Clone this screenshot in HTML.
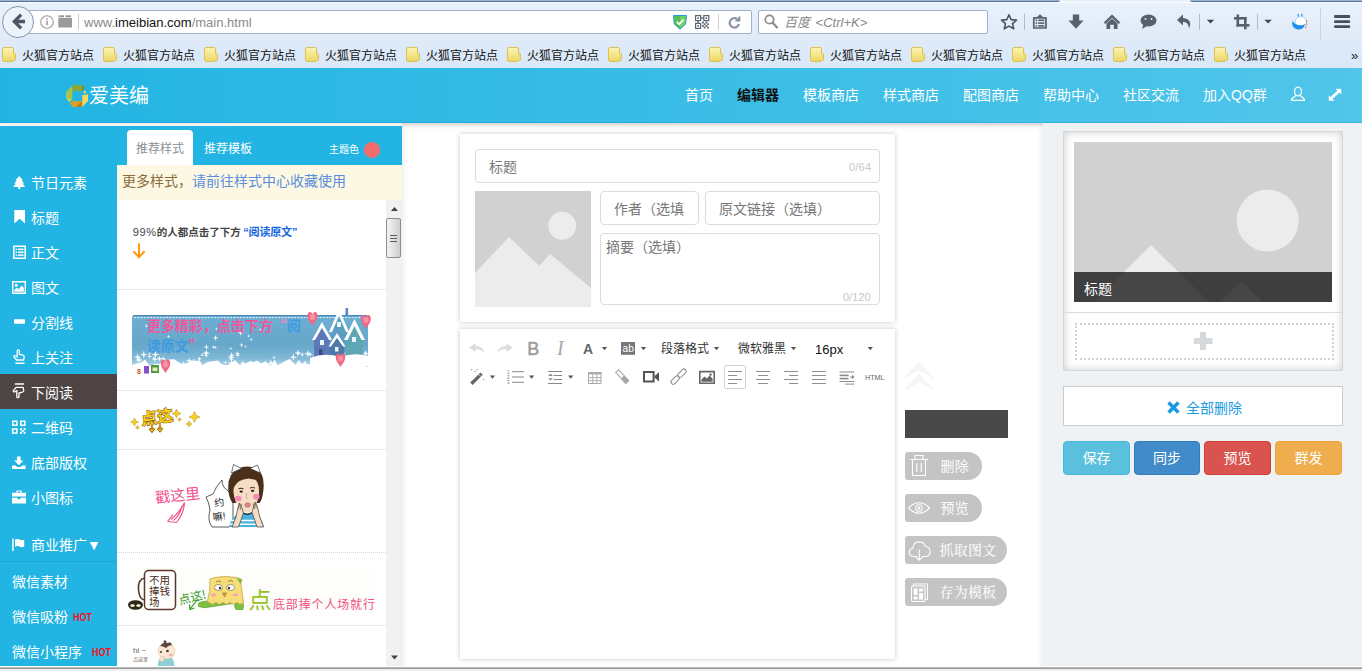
<!DOCTYPE html>
<html lang="zh-CN">
<head>
<meta charset="utf-8">
<title>爱美编</title>
<style>
*{box-sizing:border-box;margin:0;padding:0}
html,body{width:1362px;height:671px;overflow:hidden;background:#fff}
body{font-family:"Liberation Sans","Noto Sans CJK SC",sans-serif;font-size:14px;color:#333;position:relative}
.abs{position:absolute}
/* ---------- browser chrome ---------- */
#chrome{position:absolute;left:0;top:0;width:1362px;height:68px;background:linear-gradient(#e9f1fb 0,#e2ecf9 30px,#dce9f8 50px,#dbe8f7 68px)}
#chrome .topline{position:absolute;left:0;top:0;height:2px;background:linear-gradient(#9cb3d3 0,#9cb3d3 50%,#53709b 50%,#53709b 100%);border-radius:0 0 6px 6px}
#chrome .topw{position:absolute;left:0;top:2px;width:1362px;height:1px;background:#fbfdff}
#urlbar{position:absolute;left:26px;top:10px;width:726px;height:24px;background:#fff;border:1px solid #9fb2cd;border-radius:2px}
#backbtn{position:absolute;left:2px;top:6px;width:32px;height:32px;border-radius:50%;background:#edf3fb;border:1px solid #8496ae}
#urltext{position:absolute;left:84px;top:15px;font-size:13px;line-height:16px;color:#8a8a8a;letter-spacing:0}
#urltext b{color:#111;font-weight:normal}
#searchbar{position:absolute;left:758px;top:10px;width:230px;height:24px;background:#fff;border:1px solid #9fb2cd;border-radius:2px}
#searchtext{position:absolute;left:784px;top:15px;word-spacing:2px;font-size:13px;line-height:16px;color:#888;font-style:italic}
.bm{position:absolute;top:47px;height:17px;font-size:12px;line-height:17px;color:#111;white-space:nowrap}
.bm i{position:absolute;left:-1px;top:0;width:12px;height:15px;background:linear-gradient(#fbf3b2,#f5e68c 50%,#ecd668);border:1px solid #dcc255;border-radius:2px}
.bm i:after{content:"";position:absolute;left:10px;top:5px;width:2px;height:6px;background:#f0dc78;border:1px solid #dcc255;border-left:0;border-radius:0 2px 2px 0}
.bm span{position:absolute;left:19px;top:1px}
/* ---------- site header ---------- */
#hdr{position:absolute;left:0;top:68px;width:1362px;height:55px;background:linear-gradient(90deg,#22b4e2,#51c5ea);box-shadow:inset 0 -1px 0 rgba(0,140,200,.28)}
#hdrline{position:absolute;left:0;top:123px;width:1362px;height:3px;background:linear-gradient(#f3eceb,#faf6f5)}
#logo-t{position:absolute;left:89px;top:83px;font-size:20px;line-height:26px;color:#fff;letter-spacing:0}
.nav{position:absolute;top:86px;font-size:14px;line-height:18px;color:#fff;white-space:nowrap}
.nav.cur{color:#111;font-weight:bold}
/* ---------- left sidebar ---------- */
#side{position:absolute;left:0;top:126px;width:117px;height:540px;background:#22b4e2}
.si{position:absolute;left:0;width:117px;height:35px;font-size:14px;line-height:35px;color:#fff;white-space:nowrap}
.si span{position:absolute;left:31px;top:0}
.si.sel{background:#4e4443}
.si svg{position:absolute;left:12px;top:10px}
.s2{position:absolute;left:12px;font-size:14px;line-height:20px;color:#fff;white-space:nowrap}
.hot{font-family:"Liberation Sans",sans-serif;font-weight:bold;font-size:11px;color:#f5101a;letter-spacing:0;margin-left:5px;position:relative;top:-1px;display:inline-block;transform:scaleX(.82);transform-origin:0 50%}
/* ---------- style panel ---------- */
#sp{position:absolute;left:117px;top:126px;width:285px;height:540px;background:#fff}
#sphead{position:absolute;left:0;top:0;width:285px;height:39px;background:#22b4e2}
#tab1{position:absolute;left:10px;top:4px;width:66px;height:35px;background:#fff;border-radius:4px 4px 0 0;font-size:12px;line-height:39px;text-align:center;color:#8a8f96}
#tab2{position:absolute;left:87px;top:4px;height:35px;font-size:12px;line-height:39px;color:#fff}
#theme{position:absolute;left:212px;top:17px;font-size:10px;line-height:14px;color:#fff}
#dot{position:absolute;left:247px;top:16px;width:16px;height:16px;border-radius:50%;background:#f46b6b}
#note{position:absolute;left:0;top:39px;width:285px;height:35px;background:#fcf8e3;font-size:14px;line-height:33px;padding-left:5px;color:#8a6d3b;white-space:nowrap}
#note a{color:#5b8edc;text-decoration:none}
.sep{position:absolute;left:0;width:269px;height:0;border-top:1px dotted #d4d4d4}
#sb{position:absolute;left:269px;top:74px;width:16px;height:466px;background:#f1f1f1}
#sbthumb{position:absolute;left:0;top:18px;width:15px;height:40px;border:1px solid #8c8c8c;border-radius:2px;background:linear-gradient(90deg,#f2f2f2,#e4e4e4 45%,#cdcdcd)}
/* ---------- main ---------- */
#right{position:absolute;left:1043px;top:124px;width:319px;height:542px;background:#eef2f4}
.card{position:absolute;background:#fff;box-shadow:0 0 5px rgba(0,0,0,.22)}
.inp{position:absolute;border:1px solid #dcdcdc;border-radius:4px;background:#fff;color:#777;font-size:14px;white-space:nowrap;overflow:hidden}
.cnt{position:absolute;font-size:11px;color:#c8c8c8;line-height:12px}
.ph{position:absolute;background:#d1d1d1;overflow:hidden}
/* tool buttons */
.pill{position:absolute;left:905px;height:28px;background:#c4c4c4;border-radius:3px 14px 14px 3px;color:#fbfbfb;font-weight:400;font-size:14px;line-height:28px;white-space:nowrap}
.pill.sf{font-family:"Liberation Serif","Noto Serif CJK SC",serif;font-weight:500}
.pill span{position:absolute;left:35.5px;top:0;letter-spacing:0.2px}
.pill.sf span{left:34.5px;top:1px}
.btn{position:absolute;top:441px;height:34px;border-radius:4px;color:#fff;font-size:14px;line-height:33px;text-align:center;border:1px solid}
#bottom{position:absolute;left:0;top:667px;width:1362px;height:4px;background:linear-gradient(#b8b8b8 0,#b8b8b8 1px,#9a9a9a 1px,#9a9a9a 2px,#f0f0f0 2px)}
</style>
</head>
<body>
<!-- BROWSER CHROME -->
<div id="chrome">
 <div class="topw"></div>
 <div class="topline" style="left:-10px;width:1070px"></div>
 <div class="topline" style="left:1190px;width:182px"></div>
 <div id="urlbar"></div>
 <div id="backbtn"></div>
 <div id="urltext">www.<b>imeibian.com</b>/main.html</div>
 <div id="searchbar"></div>
 <div id="searchtext">百度 &lt;Ctrl+K&gt;</div>
<div class="bm" style="left:3px"><i></i><span>火狐官方站点</span></div>
<div class="bm" style="left:104px"><i></i><span>火狐官方站点</span></div>
<div class="bm" style="left:205px"><i></i><span>火狐官方站点</span></div>
<div class="bm" style="left:306px"><i></i><span>火狐官方站点</span></div>
<div class="bm" style="left:407px"><i></i><span>火狐官方站点</span></div>
<div class="bm" style="left:508px"><i></i><span>火狐官方站点</span></div>
<div class="bm" style="left:609px"><i></i><span>火狐官方站点</span></div>
<div class="bm" style="left:710px"><i></i><span>火狐官方站点</span></div>
<div class="bm" style="left:811px"><i></i><span>火狐官方站点</span></div>
<div class="bm" style="left:912px"><i></i><span>火狐官方站点</span></div>
<div class="bm" style="left:1013px"><i></i><span>火狐官方站点</span></div>
<div class="bm" style="left:1114px"><i></i><span>火狐官方站点</span></div>
<div class="bm" style="left:1215px"><i></i><span>火狐官方站点</span></div>
<div class="abs" style="left:1351px;top:47px;font-size:13px;line-height:17px;color:#222">»</div>

<svg class="abs" style="left:0;top:0" width="1362" height="45" viewBox="0 0 1362 45">
 <!-- back arrow -->
 <path d="M12 21.5 L20 13.5 L22.3 15.8 L18.3 19.8 L25 19.8 L25 23.2 L18.3 23.2 L22.3 27.2 L20 29.5 Z" fill="#4c5665"/>
 <!-- info -->
 <circle cx="47" cy="22" r="6.3" fill="none" stroke="#9a9a9a" stroke-width="1.1"/>
 <rect x="46.3" y="20.8" width="1.5" height="4.6" fill="#9a9a9a"/><rect x="46.3" y="18.3" width="1.5" height="1.5" fill="#9a9a9a"/>
 <!-- blocks -->
 <rect x="58.5" y="15.3" width="5.5" height="2" fill="#9a9a9a"/><rect x="65.5" y="15.3" width="5.5" height="2" fill="#9a9a9a"/>
 <rect x="58.3" y="18" width="13.7" height="9.5" fill="#9a9a9a"/>
 <rect x="78" y="14" width="1" height="16" fill="#c9c9c9"/>
 <!-- shield -->
 <path d="M673.5 15.500 H686.500 L685.700 24 L680 29.200 L674.300 24 Z" fill="#56c152" stroke="#1e9bd7" stroke-width="1"/>
 <path d="M680 16 H686 L685.200 23.800 L680 28.500 Z" fill="#6fce66"/>
 <path d="M676.800 21.800 L679.200 24.200 L683.600 19.600" fill="none" stroke="#fff" stroke-width="1.700"/>
 <!-- qr -->
 <g fill="none" stroke="#5b6472" stroke-width="1.200"><rect x="695.600" y="15.600" width="5" height="5"/><rect x="703.800" y="15.600" width="5" height="5"/><rect x="695.600" y="23.400" width="5" height="5"/></g>
 <g fill="#5b6472"><rect x="697.300" y="17.300" width="1.600" height="1.600"/><rect x="705.500" y="17.300" width="1.600" height="1.600"/><rect x="697.300" y="25.100" width="1.600" height="1.600"/><rect x="701" y="17.400" width="2.400" height="1.300"/><rect x="697.400" y="21" width="1.300" height="2"/>
 <rect x="702" y="21.600" width="1.800" height="1.800"/><rect x="705.400" y="21.600" width="1.800" height="1.800"/><rect x="703.700" y="23.300" width="1.800" height="1.800"/><rect x="707.100" y="23.300" width="1.800" height="1.800"/><rect x="702" y="25" width="1.800" height="1.800"/><rect x="705.400" y="25" width="1.800" height="1.800"/><rect x="703.700" y="26.700" width="1.800" height="1.800"/><rect x="707.100" y="26.700" width="1.800" height="1.800"/></g>
 <rect x="718" y="14" width="1" height="16" fill="#d0d0d0"/>
 <!-- reload -->
 <path d="M737 18.900 A4.700 4.700 0 1 0 739 24" fill="none" stroke="#8a94a1" stroke-width="2.200"/>
 <path d="M734.600 21.400 L740.300 21.400 L740.300 15.600 Z" fill="#8a94a1"/>
 <!-- search glass -->
 <circle cx="769.5" cy="19.5" r="4.2" fill="none" stroke="#8a8a8a" stroke-width="1.7"/>
 <path d="M772.6 22.8 L777 27.4" stroke="#8a8a8a" stroke-width="2.2" stroke-linecap="round"/>
 <!-- star -->
 <path d="M1009 14.800 L1011.200 19.600 L1016.500 20.100 L1012.500 23.600 L1013.700 28.800 L1009 26.100 L1004.300 28.800 L1005.500 23.600 L1001.500 20.100 L1006.800 19.600 Z" fill="none" stroke="#4a5361" stroke-width="1.600" stroke-linejoin="round"/>
 <rect x="1024" y="14" width="1" height="16" fill="#b4bcc8"/>
 <!-- clipboard list -->
 <path d="M1033.800 17.800 H1046 V28 H1033.800 Z" fill="none" stroke="#56616f" stroke-width="1.700" stroke-linejoin="round"/>
 <path d="M1036.500 17.600 L1040 14.200 L1043.500 17.600 Z" fill="#56616f"/>
 <g fill="#56616f"><rect x="1035.600" y="19.500" width="1.600" height="1.600"/><rect x="1038.200" y="19.500" width="6.200" height="1.600"/><rect x="1035.600" y="22.300" width="1.600" height="1.600"/><rect x="1038.200" y="22.300" width="6.200" height="1.600"/><rect x="1035.600" y="25.100" width="1.600" height="1.600"/><rect x="1038.200" y="25.100" width="6.200" height="1.600"/></g>
 <!-- download arrow -->
 <path d="M1072.8 14.5 L1079.2 14.5 L1079.2 20.5 L1083.5 20.5 L1076 28.8 L1068.5 20.5 L1072.8 20.5 Z" fill="#56616f"/>
 <!-- home -->
 <path d="M1112 14.5 L1120.3 22.5 L1118.6 24 L1112 17.8 L1105.4 24 L1103.7 22.5 Z" fill="#56616f"/>
 <path d="M1106.5 23.5 L1112 18.6 L1117.5 23.5 L1117.5 29 L1113.8 29 L1113.8 24.8 L1110.2 24.8 L1110.2 29 L1106.5 29 Z" fill="#56616f"/>
 <!-- chat -->
 <ellipse cx="1148.5" cy="20.5" rx="8" ry="6" fill="#56616f"/>
 <path d="M1143.5 24 L1142 29 L1148 25.5 Z" fill="#56616f"/>
 <circle cx="1145.5" cy="19" r="1" fill="#dfe8f5"/><circle cx="1151.5" cy="19" r="1" fill="#dfe8f5"/>
 <!-- undo -->
 <path d="M1183 14.5 L1177 20 L1183 25.5 L1183 22 Q1188.5 21.5 1189 28.8 Q1193 19 1183 18 Z" fill="#56616f"/>
 <rect x="1199" y="14" width="1" height="16" fill="#b4bcc8"/>
 <path d="M1206.800 19.800 L1214.200 19.800 L1210.500 23.600 Z" fill="#3f4752"/>
 <!-- crop -->
 <g fill="#56616f"><rect x="1236.5" y="14.5" width="2.6" height="12"/><rect x="1234" y="17" width="12.5" height="2.6"/><rect x="1244" y="17" width="2.6" height="12.3"/><rect x="1236.5" y="24" width="13" height="2.6"/></g>
 <rect x="1257" y="14" width="1" height="16" fill="#b4bcc8"/>
 <path d="M1264.400 19.800 L1271.800 19.800 L1268.100 23.600 Z" fill="#3f4752"/>
 <!-- rabbit -->
 <path d="M1298.600 16.800 L1298.200 14.300 M1301.600 16.600 L1302 14.200" stroke="#3a9cec" stroke-width="1.300" stroke-linecap="round"/>
 <ellipse cx="1300.800" cy="21.600" rx="5.600" ry="5" fill="#fff" stroke="#8cc6f4" stroke-width="0.700"/>
 <path d="M1292.600 20.500 Q1294.500 25.500 1301.500 25.200 Q1304 25 1305 24 Q1304.500 28 1300.500 29.300 Q1295.500 30.300 1293 26.500 Q1291.500 23.500 1292.600 20.500 Z" fill="#2290ea"/>
 <path d="M1306.300 20 Q1307.500 23 1305.500 28" stroke="#f07a4a" stroke-width="1.100" fill="none" stroke-dasharray="2 1.200"/>
 <rect x="1320" y="8" width="1" height="32" fill="#c9d3e2"/>
 <!-- hamburger -->
 <g fill="#454f5d"><rect x="1334" y="15.100" width="16.200" height="2.900" rx="1.300"/><rect x="1334" y="20.150" width="16.200" height="2.900" rx="1.300"/><rect x="1334" y="25.200" width="16.200" height="2.900" rx="1.300"/></g>
</svg>

</div>
<!-- SITE HEADER -->
<div id="hdr"></div>
<div id="hdrline"></div>

<svg class="abs" style="left:64px;top:83px" width="26" height="26" viewBox="64 83 26 26">
 <path d="M72.5 85 L82.3 85 L84.4 88.1 L82.3 91 L72.5 91 Z" fill="#8aa636"/>
 <path d="M82.3 85 L84.4 88.1 L82.3 91 Z" fill="#6d8729"/>
 <path d="M66 92 L72.3 86 L72.3 99.5 L66 97.8 Z" fill="#a8c44c"/>
 <path d="M66 97.8 L72.3 99.5 L69 102 L66.8 99 Z" fill="#c9d94f"/>
 <path d="M69.7 103.5 L72.3 101 L82 101 L82 107 L73 107 Z" fill="#d3a12c"/>
 <path d="M76 107 L82 101 L82 107 Z" fill="#b5821f"/>
 <path d="M82.3 95 L88 94.2 L88 101 L82.3 107 Z" fill="#f7d75c"/>
 <circle cx="84.8" cy="92" r="1.2" fill="#f7d75c"/>
</svg>
<div id="logo-t">爱美编</div>
<div class="nav" style="left:685px">首页</div>
<div class="nav cur" style="left:737px">编辑器</div>
<div class="nav" style="left:803px">模板商店</div>
<div class="nav" style="left:883px">样式商店</div>
<div class="nav" style="left:963px">配图商店</div>
<div class="nav" style="left:1043px">帮助中心</div>
<div class="nav" style="left:1123px">社区交流</div>
<div class="nav" style="left:1203px">加入QQ群</div>

<svg class="abs" style="left:1285px;top:83px" width="70" height="24" viewBox="1285 83 70 24">
 <g fill="none" stroke="#fff" stroke-width="1.300" stroke-linejoin="round">
 <ellipse cx="1298" cy="91.500" rx="3.500" ry="4.300"/>
 <path d="M1295.600 95 Q1295.400 96.600 1293.600 97.300 Q1291.500 98.200 1291.500 100.400 H1304.500 Q1304.500 98.200 1302.400 97.300 Q1300.600 96.600 1300.400 95"/>
 </g>
 <g fill="#fff">
 <path d="M1335.600 88.800 H1341.200 V94.400 L1339.400 92.600 L1336.400 95.600 L1334.400 93.600 L1337.400 90.600 Z"/>
 <path d="M1334.400 100.800 H1328.800 V95.200 L1330.600 97 L1333.600 94 L1335.600 96 L1332.600 99 Z"/>
 <path d="M1333 95.600 L1336 92.600 L1337.400 94 L1334.400 97 Z"/>
 </g>
</svg>
<!-- SIDEBAR -->
<div id="side">
 <div class="si" style="top:40px"><span>节日元素</span></div>
 <div class="si" style="top:75px"><span>标题</span></div>
 <div class="si" style="top:110px"><span>正文</span></div>
 <div class="si" style="top:145px"><span>图文</span></div>
 <div class="si" style="top:180px"><span>分割线</span></div>
 <div class="si" style="top:215px"><span>上关注</span></div>
 <div class="si sel" style="top:248px;line-height:39px"><span>下阅读</span></div>
 <div class="si" style="top:285px"><span>二维码</span></div>
 <div class="si" style="top:320px"><span>底部版权</span></div>
 <div class="si" style="top:355px"><span>小图标</span></div>
 <div class="si" style="top:402px"><span>商业推广▼</span></div>
 <div class="s2" style="top:446px">微信素材</div>
 <div class="s2" style="top:481px">微信吸粉<b class="hot">HOT</b></div>
 <div class="s2" style="top:516px">微信小程序<b class="hot" style="margin-left:10px">HOT</b></div>
</div>

<svg class="abs" style="left:0;top:126px" width="117" height="540" viewBox="0 126 117 540">
 <g fill="#fff">
 <!-- tree -->
 <path d="M19.2 176 L23 180.2 L21.6 180.2 L24.2 183.4 L22.6 183.4 L25.2 187 L20.2 187 L20.2 189 L18.2 189 L18.2 187 L13.2 187 L15.8 183.4 L14.2 183.4 L16.8 180.2 L15.4 180.2 Z"/>
 <!-- bookmark -->
 <path d="M14.3 210 L25 210 L25 223.5 L19.65 218.8 L14.3 223.5 Z"/>
 <!-- list -->
 <path d="M13 245.5 H26 V259 H13 Z M14.6 247.1 V257.4 H24.4 V247.1 Z" fill-rule="evenodd"/>
 <rect x="15.6" y="248.6" width="1.5" height="1.5"/><rect x="18" y="248.6" width="5.6" height="1.5"/>
 <rect x="15.6" y="251.5" width="1.5" height="1.5"/><rect x="18" y="251.5" width="5.6" height="1.5"/>
 <rect x="15.6" y="254.4" width="1.5" height="1.5"/><rect x="18" y="254.4" width="5.6" height="1.5"/>
 <!-- picture -->
 <path d="M12 281 H26 V294 H12 Z M13.4 282.4 V292.6 H24.6 V282.4 Z" fill-rule="evenodd"/>
 <circle cx="16.2" cy="285.2" r="1.5"/>
 <path d="M14.2 291.8 L14.2 290 L16.8 287.6 L18.6 289.2 L21.8 285.6 L23.8 287.8 L23.8 291.8 Z"/>
 <!-- minus -->
 <rect x="14" y="319.2" width="11" height="4.6" rx="0.8"/>
 <!-- briefcase -->
 <path d="M12 492.8 H26 V496.6 H12 Z M12 497.8 H17.6 V499.2 H20.4 V497.8 H26 V503.4 H12 Z"/>
 <path d="M16.4 492.8 V490.4 H21.6 V492.8 H20.3 V491.6 H17.7 V492.8 Z"/>
 <!-- download -->
 <path d="M17 456.6 H20.6 V460.6 H23.4 L18.8 465.2 L14.2 460.6 H17 Z"/>
 <path d="M12 465.4 H15.4 L17.2 467 H20.4 L22.2 465.4 H25.6 V469 H12 Z"/>
 <!-- qr -->
 <path d="M12 420.5 H17.6 V426.1 H12 Z M13.5 422 V424.6 H16.1 V422 Z" fill-rule="evenodd"/>
 <path d="M20 420.5 H25.6 V426.1 H20 Z M21.5 422 V424.6 H24.1 V422 Z" fill-rule="evenodd"/>
 <path d="M12 428.2 H17.6 V433.8 H12 Z M13.5 429.7 V432.3 H16.1 V429.7 Z" fill-rule="evenodd"/>
 <rect x="20" y="428.2" width="2" height="2"/><rect x="23.6" y="428.2" width="2" height="2"/><rect x="21.8" y="430" width="2" height="2"/><rect x="20" y="431.8" width="2" height="2"/><rect x="23.6" y="431.8" width="2" height="2"/>
 </g>
 <g fill="none" stroke="#fff" stroke-width="1.3" stroke-linejoin="round" stroke-linecap="round">
 <!-- hand up -->
 <path d="M17.2 357 V351 Q17.2 349.8 18.3 349.8 Q19.4 349.8 19.4 351 V354.4 L23 355.2 Q24.4 355.6 24.2 357 L23.6 360 H16.6 L14 356.8 Q13.6 355.8 14.6 355.6 Q15.4 355.5 17.2 357 Z"/>
 <path d="M16 363.3 H24" stroke-width="1.6"/>
 <!-- hand down -->
 <path d="M16.8 390.4 V396.4 Q16.8 397.6 17.9 397.6 Q19 397.6 19 396.4 V393 L22.4 392.2 Q23.9 391.8 23.7 390.4 L23.1 387.4 H16.1 L13.4 390.6 Q13 391.6 14 391.8 Q14.9 391.9 16.8 390.4 Z"/>
 <path d="M15.4 384 H23.4" stroke-width="1.6"/>
 <!-- flag -->
 </g>
 <rect x="12.2" y="538.6" width="1.5" height="12.4" fill="#fff"/>
 <path d="M15 539.6 Q17.4 538.4 19.6 539.6 Q21.8 540.8 24.2 539.6 V546.6 Q21.8 547.8 19.6 546.6 Q17.4 545.4 15 546.6 Z" fill="#fff"/>
 <rect x="0" y="561" width="117" height="1" fill="#1fa4d0"/>
</svg>
<!-- STYLE PANEL -->
<div id="sp">
 <div id="sphead">
  <div id="tab1">推荐样式</div>
  <div id="tab2">推荐模板</div>
  <div id="theme">主题色</div>
  <div id="dot"></div>
 </div>
 <div id="note">更多样式，<a>请前往样式中心收藏使用</a></div>
 <div class="sep" style="top:163px"></div>
 <div class="sep" style="top:264px"></div>
 <div class="sep" style="top:323px"></div>
 <div class="sep" style="top:426px"></div>
 <div class="sep" style="top:499px"></div>
 <div id="sb"><div id="sbthumb"></div>
<svg class="abs" style="left:0;top:0" width="16" height="466" viewBox="0 0 16 466"><path d="M5 11 H12 L8.500 7 Z M5 455.500 H12 L8.500 459.500 Z" fill="#404040"/><path d="M4 35.500 H11 M4 38.500 H11 M4 41.500 H11" stroke="#5a5a5a" stroke-width="1.200"/></svg></div>

</div>

<svg class="abs" style="left:117px;top:200px" width="269" height="466" viewBox="117 200 269 466" font-family="Liberation Sans, Noto Sans CJK SC, sans-serif">
 <defs>
  <linearGradient id="snowg" x1="0" y1="0" x2="0" y2="1"><stop offset="0" stop-color="#6dafd2"/><stop offset=".55" stop-color="#66a7ca"/><stop offset=".8" stop-color="#7fb8d6"/><stop offset="1" stop-color="#c4e2ef"/></linearGradient>
 </defs>
 <!-- item 1 -->
 <text x="132.700" y="236" font-size="10.500" font-weight="bold" fill="#444"><tspan font-weight="normal" letter-spacing="0.700" font-size="11">99%</tspan>的人都点击了下方<tspan fill="#1467dd" dx="2.4" font-size="11" letter-spacing="-0.150">“阅读原文”</tspan></text>
 <path d="M139 243.2 V257 M133.4 251.2 L139 257.2 L144.6 251.2" fill="none" stroke="#ff9a0e" stroke-width="2"/>
 <!-- item 2 banner -->
 <rect x="132" y="315" width="236" height="54" rx="3" fill="url(#snowg)"/>
 <rect x="133" y="315" width="234" height="1.200" fill="#4c88ba"/>
 <path d="M134 317.600 H366" stroke="#e4f2fa" stroke-width="1" stroke-dasharray="2 1.200"/>
 <path d="M215.6 334.9 L216.3 337.2 L218.6 337.9 L216.3 338.6 L215.6 340.9 L214.9 338.6 L212.6 337.9 L214.9 337.2 Z" fill="#fff" opacity="0.95"/><path d="M215.5 345.4 L216.0 346.9 L217.5 347.4 L216.0 347.8 L215.5 349.4 L215.1 347.8 L213.5 347.4 L215.1 346.9 Z" fill="#fff" opacity="0.95"/><path d="M168.5 334.4 L169.0 335.9 L170.5 336.4 L169.0 336.8 L168.5 338.4 L168.1 336.8 L166.5 336.4 L168.1 335.9 Z" fill="#fff" opacity="0.95"/><path d="M152.6 328.1 L152.9 329.3 L154.2 329.7 L152.9 330.1 L152.6 331.3 L152.2 330.1 L151.0 329.7 L152.2 329.3 Z" fill="#fff" opacity="0.95"/><path d="M230.8 346.9 L231.2 348.1 L232.4 348.5 L231.2 348.9 L230.8 350.1 L230.5 348.9 L229.2 348.5 L230.5 348.1 Z" fill="#fff" opacity="0.95"/><path d="M240.8 329.7 L241.5 332.0 L243.8 332.7 L241.5 333.4 L240.8 335.7 L240.1 333.4 L237.8 332.7 L240.1 332.0 Z" fill="#fff" opacity="0.95"/><path d="M251.1 337.7 L251.5 339.2 L253.1 339.7 L251.5 340.1 L251.1 341.7 L250.6 340.1 L249.1 339.7 L250.6 339.2 Z" fill="#fff" opacity="0.95"/><path d="M245.7 345.0 L246.0 346.3 L247.3 346.6 L246.0 347.0 L245.7 348.2 L245.3 347.0 L244.1 346.6 L245.3 346.3 Z" fill="#fff" opacity="0.95"/><path d="M146.5 324.1 L146.9 325.6 L148.5 326.1 L146.9 326.5 L146.5 328.1 L146.0 326.5 L144.5 326.1 L146.0 325.6 Z" fill="#fff" opacity="0.95"/><path d="M241.5 342.5 L242.1 344.4 L243.9 344.9 L242.1 345.4 L241.5 347.3 L241.0 345.4 L239.1 344.9 L241.0 344.4 Z" fill="#fff" opacity="0.95"/><path d="M213.5 345.0 L214.0 346.5 L215.5 347.0 L214.0 347.4 L213.5 349.0 L213.1 347.4 L211.5 347.0 L213.1 346.5 Z" fill="#fff" opacity="0.95"/><path d="M248.7 334.4 L249.1 335.6 L250.3 336.0 L249.1 336.4 L248.7 337.6 L248.3 336.4 L247.1 336.0 L248.3 335.6 Z" fill="#fff" opacity="0.95"/><path d="M216.5 327.3 L216.9 328.5 L218.1 328.9 L216.9 329.3 L216.5 330.5 L216.1 329.3 L214.9 328.9 L216.1 328.5 Z" fill="#fff" opacity="0.95"/><path d="M260.6 328.1 L261.0 329.6 L262.6 330.1 L261.0 330.5 L260.6 332.1 L260.1 330.5 L258.6 330.1 L260.1 329.6 Z" fill="#fff" opacity="0.95"/><path d="M226.3 319.4 L226.6 320.6 L227.9 321.0 L226.6 321.3 L226.3 322.6 L225.9 321.3 L224.7 321.0 L225.9 320.6 Z" fill="#fff" opacity="0.95"/><path d="M206.5 344.1 L207.1 346.4 L209.5 347.1 L207.1 347.8 L206.5 350.1 L205.8 347.8 L203.5 347.1 L205.8 346.4 Z" fill="#fff" opacity="0.95"/><path d="M149.5 351.2 L150.0 352.7 L151.5 353.2 L150.0 353.6 L149.5 355.2 L149.1 353.6 L147.5 353.2 L149.1 352.7 Z" fill="#fff" opacity="0.95"/><path d="M183.5 361.2 L184.0 362.7 L185.5 363.2 L184.0 363.6 L183.5 365.2 L183.1 363.6 L181.5 363.2 L183.1 362.7 Z" fill="#fff" opacity="0.95"/><path d="M243.0 360.0 L243.9 362.9 L246.8 363.8 L243.9 364.6 L243.0 367.6 L242.2 364.6 L239.2 363.8 L242.2 362.9 Z" fill="#fff" opacity="0.95"/><path d="M231.4 356.6 L232.0 358.6 L234.0 359.2 L232.0 359.8 L231.4 361.8 L230.8 359.8 L228.8 359.2 L230.8 358.6 Z" fill="#fff" opacity="0.95"/><path d="M314.6 354.0 L315.1 355.5 L316.6 356.0 L315.1 356.4 L314.6 358.0 L314.2 356.4 L312.6 356.0 L314.2 355.5 Z" fill="#fff" opacity="0.95"/><path d="M206.2 349.4 L207.1 352.3 L210.0 353.2 L207.1 354.0 L206.2 357.0 L205.3 354.0 L202.4 353.2 L205.3 352.3 Z" fill="#fff" opacity="0.95"/><path d="M309.9 351.7 L310.5 353.7 L312.5 354.3 L310.5 354.9 L309.9 356.9 L309.3 354.9 L307.3 354.3 L309.3 353.7 Z" fill="#fff" opacity="0.95"/><path d="M298.0 349.3 L298.9 352.3 L301.8 353.1 L298.9 354.0 L298.0 356.9 L297.2 354.0 L294.2 353.1 L297.2 352.3 Z" fill="#fff" opacity="0.95"/><path d="M318.9 352.4 L319.5 354.4 L321.5 355.0 L319.5 355.5 L318.9 357.6 L318.3 355.5 L316.3 355.0 L318.3 354.4 Z" fill="#fff" opacity="0.95"/><path d="M237.8 352.5 L238.4 354.5 L240.4 355.1 L238.4 355.7 L237.8 357.7 L237.2 355.7 L235.2 355.1 L237.2 354.5 Z" fill="#fff" opacity="0.95"/><path d="M231.3 353.4 L232.1 356.4 L235.1 357.2 L232.1 358.1 L231.3 361.0 L230.4 358.1 L227.5 357.2 L230.4 356.4 Z" fill="#fff" opacity="0.95"/><path d="M231.6 352.1 L232.3 354.6 L234.8 355.3 L232.3 356.1 L231.6 358.5 L230.9 356.1 L228.4 355.3 L230.9 354.6 Z" fill="#fff" opacity="0.95"/><path d="M334.5 360.5 L335.2 363.0 L337.7 363.7 L335.2 364.4 L334.5 366.9 L333.8 364.4 L331.3 363.7 L333.8 363.0 Z" fill="#fff" opacity="0.95"/><path d="M365.5 350.6 L366.1 352.6 L368.1 353.2 L366.1 353.8 L365.5 355.8 L364.9 353.8 L362.9 353.2 L364.9 352.6 Z" fill="#fff" opacity="0.95"/><path d="M225.5 360.4 L225.9 361.9 L227.5 362.4 L225.9 362.8 L225.5 364.4 L225.0 362.8 L223.5 362.4 L225.0 361.9 Z" fill="#fff" opacity="0.95"/><path d="M143.8 350.8 L144.6 353.8 L147.6 354.6 L144.6 355.5 L143.8 358.4 L142.9 355.5 L140.0 354.6 L142.9 353.8 Z" fill="#fff" opacity="0.95"/><path d="M193.9 358.3 L194.6 360.8 L197.1 361.5 L194.6 362.2 L193.9 364.7 L193.2 362.2 L190.7 361.5 L193.2 360.8 Z" fill="#fff" opacity="0.95"/><path d="M326.6 355.2 L327.1 356.8 L328.6 357.2 L327.1 357.7 L326.6 359.2 L326.2 357.7 L324.6 357.2 L326.2 356.8 Z" fill="#fff" opacity="0.95"/><path d="M154.9 356.8 L155.5 358.8 L157.5 359.4 L155.5 360.0 L154.9 362.0 L154.3 360.0 L152.3 359.4 L154.3 358.8 Z" fill="#fff" opacity="0.95"/><path d="M137.6 353.3 L138.5 356.2 L141.4 357.1 L138.5 357.9 L137.6 360.9 L136.7 357.9 L133.8 357.1 L136.7 356.2 Z" fill="#fff" opacity="0.95"/><path d="M163.5 356.9 L164.1 358.9 L166.1 359.5 L164.1 360.0 L163.5 362.1 L162.9 360.0 L160.9 359.5 L162.9 358.9 Z" fill="#fff" opacity="0.95"/><path d="M335.0 352.4 L335.6 354.4 L337.6 355.0 L335.6 355.6 L335.0 357.6 L334.4 355.6 L332.4 355.0 L334.4 354.4 Z" fill="#fff" opacity="0.95"/><path d="M206.1 352.9 L206.7 354.9 L208.7 355.5 L206.7 356.1 L206.1 358.1 L205.5 356.1 L203.5 355.5 L205.5 354.9 Z" fill="#fff" opacity="0.95"/><path d="M302.3 352.1 L302.9 354.2 L304.9 354.7 L302.9 355.3 L302.3 357.3 L301.7 355.3 L299.7 354.7 L301.7 354.2 Z" fill="#fff" opacity="0.95"/><path d="M293.4 353.5 L294.2 356.4 L297.2 357.3 L294.2 358.1 L293.4 361.1 L292.5 358.1 L289.6 357.3 L292.5 356.4 Z" fill="#fff" opacity="0.95"/><path d="M274.0 355.6 L274.5 357.2 L276.0 357.6 L274.5 358.1 L274.0 359.6 L273.6 358.1 L272.0 357.6 L273.6 357.2 Z" fill="#fff" opacity="0.95"/><path d="M159.3 355.4 L160.0 357.9 L162.5 358.6 L160.0 359.4 L159.3 361.8 L158.6 359.4 L156.1 358.6 L158.6 357.9 Z" fill="#fff" opacity="0.95"/><path d="M189.3 357.6 L190.0 360.0 L192.5 360.8 L190.0 361.5 L189.3 364.0 L188.6 361.5 L186.1 360.8 L188.6 360.0 Z" fill="#fff" opacity="0.95"/><path d="M231.6 359.2 L232.5 362.1 L235.4 363.0 L232.5 363.8 L231.6 366.8 L230.8 363.8 L227.8 363.0 L230.8 362.1 Z" fill="#fff" opacity="0.95"/><path d="M202.1 352.9 L202.5 354.5 L204.1 354.9 L202.5 355.4 L202.1 356.9 L201.6 355.4 L200.1 354.9 L201.6 354.5 Z" fill="#fff" opacity="0.95"/><path d="M163.3 356.3 L163.8 357.8 L165.3 358.3 L163.8 358.7 L163.3 360.3 L162.9 358.7 L161.3 358.3 L162.9 357.8 Z" fill="#fff" opacity="0.95"/><path d="M199.0 360.5 L199.6 362.5 L201.6 363.1 L199.6 363.7 L199.0 365.7 L198.4 363.7 L196.4 363.1 L198.4 362.5 Z" fill="#fff" opacity="0.95"/><path d="M307.8 350.0 L308.6 352.9 L311.6 353.8 L308.6 354.6 L307.8 357.6 L306.9 354.6 L304.0 353.8 L306.9 352.9 Z" fill="#fff" opacity="0.95"/><path d="M237.4 351.1 L238.0 353.1 L240.0 353.7 L238.0 354.3 L237.4 356.3 L236.8 354.3 L234.8 353.7 L236.8 353.1 Z" fill="#fff" opacity="0.95"/><path d="M199.4 356.2 L200.0 358.3 L202.0 358.8 L200.0 359.4 L199.4 361.4 L198.8 359.4 L196.8 358.8 L198.8 358.3 Z" fill="#fff" opacity="0.95"/><path d="M155.4 350.7 L156.2 353.7 L159.2 354.5 L156.2 355.4 L155.4 358.3 L154.5 355.4 L151.6 354.5 L154.5 353.7 Z" fill="#fff" opacity="0.95"/><path d="M361.5 357.6 L362.1 359.6 L364.1 360.2 L362.1 360.8 L361.5 362.8 L360.9 360.8 L358.9 360.2 L360.9 359.6 Z" fill="#fff" opacity="0.95"/><path d="M270.9 359.4 L271.7 362.3 L274.7 363.2 L271.7 364.0 L270.9 367.0 L270.0 364.0 L267.1 363.2 L270.0 362.3 Z" fill="#fff" opacity="0.95"/><path d="M345.2 358.7 L345.6 360.3 L347.2 360.7 L345.6 361.2 L345.2 362.7 L344.7 361.2 L343.2 360.7 L344.7 360.3 Z" fill="#fff" opacity="0.95"/><path d="M138.9 356.2 L139.8 359.1 L142.7 360.0 L139.8 360.9 L138.9 363.8 L138.1 360.9 L135.1 360.0 L138.1 359.1 Z" fill="#fff" opacity="0.95"/><path d="M149.6 353.8 L150.2 355.8 L152.2 356.4 L150.2 357.0 L149.6 359.0 L149.0 357.0 L147.0 356.4 L149.0 355.8 Z" fill="#fff" opacity="0.95"/><path d="M365.9 350.6 L366.6 353.1 L369.1 353.8 L366.6 354.5 L365.9 357.0 L365.1 354.5 L362.7 353.8 L365.1 353.1 Z" fill="#fff" opacity="0.95"/><path d="M305.0 360.3 L305.6 362.3 L307.6 362.9 L305.6 363.5 L305.0 365.5 L304.4 363.5 L302.4 362.9 L304.4 362.3 Z" fill="#fff" opacity="0.95"/><path d="M318.0 359.9 L318.8 362.3 L321.2 363.1 L318.8 363.8 L318.0 366.3 L317.3 363.8 L314.8 363.1 L317.3 362.3 Z" fill="#fff" opacity="0.95"/><path d="M153.7 356.2 L154.2 357.8 L155.7 358.2 L154.2 358.7 L153.7 360.2 L153.3 358.7 L151.7 358.2 L153.3 357.8 Z" fill="#fff" opacity="0.95"/><path d="M336.1 355.6 L336.5 357.1 L338.1 357.6 L336.5 358.0 L336.1 359.6 L335.6 358.0 L334.1 357.6 L335.6 357.1 Z" fill="#fff" opacity="0.95"/>
 <path d="M132 378 L132.0 365.0 L136.5 363.4 L140.3 363.1 L145.0 359.6 L149.7 366.0 L155.3 364.1 L159.2 364.1 L163.7 362.1 L169.1 359.6 L174.2 359.2 L178.8 362.4 L182.2 363.9 L186.4 363.3 L192.1 360.8 L194.7 361.1 L199.5 360.4 L202.6 365.3 L207.4 362.1 L213.1 361.3 L217.9 360.4 L221.9 364.6 L227.6 365.2 L231.4 363.1 L235.0 360.0 L239.3 364.9 L244.8 364.0 L250.6 360.9 L253.7 362.2 L257.1 360.5 L261.1 363.4 L265.3 361.2 L270.7 365.9 L274.8 359.5 L277.4 365.1 L280.1 364.0 L284.6 361.2 L289.9 359.1 L292.8 362.2 L295.4 364.8 L298.7 360.0 L301.4 363.4 L305.5 363.4 L310.3 364.7 L316.1 363.8 L319.3 362.3 L322.4 359.1 L326.6 364.0 L329.7 360.9 L333.4 363.9 L337.8 363.3 L342.9 361.8 L348.2 365.3 L351.0 365.5 L356.0 359.9 L360.1 363.4 L365.8 361.6 L368 378 Z" fill="#fff"/>
 <rect x="130" y="367" width="240" height="12" fill="#fff"/>
 <text x="146.8" y="330.5" font-size="14" font-weight="bold" fill="#f0579b">更多精彩，点击下方<tspan fill="#e88ac6" font-family="Noto Sans CJK SC, sans-serif">“</tspan><tspan fill="#3d9be3">阅</tspan></text>
 <text x="146.8" y="350.5" font-size="14" font-weight="bold" fill="#3d9be3">读原文<tspan fill="#f0579b" font-family="Noto Sans CJK SC, sans-serif">”</tspan></text>
 <!-- houses -->
 <g>
  <path d="M331 330 L339 311 L347 330 V352 H331 Z" fill="#5a9fc0"/>
  <path d="M329 332 L339 309 L349 332 L346 332 L339 316 L332 332 Z" fill="#fff"/>
  <rect x="345.5" y="308" width="2.6" height="8" fill="#5b86c0"/>
  <path d="M346 338 L354.5 322 L363 338 V356 H346 Z" fill="#5fa6b4"/>
  <path d="M344 340 L354.5 319 L365 340 L361.5 340 L354.5 326 L347.5 340 Z" fill="#fff"/>
  <path d="M314 338 L322 325 L330 338 V357 H314 Z" fill="#5d78b8"/>
  <path d="M312 340 L322 322 L332 340 L329 340 L322 328 L315 340 Z" fill="#fff"/>
  <path d="M330 345 L337 335 L344 345 V358 H330 Z" fill="#4d79a8"/>
  <path d="M328.5 346.5 L337 333 L345.500 346.5 L343 346.5 L337 338 L331 346.5 Z" fill="#fff"/>
  <g fill="#eaf4fb"><rect x="320" y="340" width="4" height="5"/><rect x="337" y="322" width="4" height="5"/><rect x="352" y="337" width="4" height="5"/><rect x="335" y="347" width="3.5" height="4.5"/><rect x="319" y="349" width="3.5" height="6" fill="#3b4f86"/></g>
  <path d="M310 358 Q325 352 340 357 Q355 352 368 356 V366 H310 Z" fill="#fff"/>
 </g>
 <path d="M312.5 314.6 C311.5 310.8 307.5 311.2 307.5 315.7 C307.5 319.9 311.0 322.7 312.5 325.5 C314.0 322.7 317.5 319.9 317.5 315.7 C317.5 311.2 313.5 310.8 312.5 314.6 Z" fill="#f2667f"/><ellipse cx="312.5" cy="317.1" rx="2.8" ry="3.1" fill="#f9a3b1" opacity=".7"/><path d="M366 317.6 C365.1 313.8 361.2 314.2 361.2 318.7 C361.2 322.9 364.6 325.7 366 328.5 C367.4 325.7 370.8 322.9 370.8 318.7 C370.8 314.2 366.9 313.8 366 317.6 Z" fill="#f2667f"/><ellipse cx="366" cy="320.1" rx="2.7" ry="3.1" fill="#f9a3b1" opacity=".7"/><path d="M340.5 356.1 C339.6 352.3 335.8 352.7 335.8 357.2 C335.8 361.4 339.1 364.2 340.5 367.0 C341.9 364.2 345.2 361.4 345.2 357.2 C345.2 352.7 341.4 352.3 340.5 356.1 Z" fill="#f2667f"/><ellipse cx="340.5" cy="358.6" rx="2.7" ry="3.1" fill="#f9a3b1" opacity=".7"/><path d="M165.5 362.1 C164.6 358.3 160.8 358.7 160.8 363.2 C160.8 367.4 164.1 370.2 165.5 373.0 C166.9 370.2 170.2 367.4 170.2 363.2 C170.2 358.7 166.4 358.3 165.5 362.1 Z" fill="#f2667f"/><ellipse cx="165.5" cy="364.6" rx="2.7" ry="3.1" fill="#f9a3b1" opacity=".7"/>
 <text x="137" y="374" font-size="7" font-weight="bold" fill="#e0492f">8</text>
 <rect x="144" y="366" width="5" height="7.5" fill="#8a4fc0"/><rect x="151" y="365" width="8" height="8" fill="#4d9a3a"/><rect x="152.5" y="367.5" width="5" height="3.5" fill="#e9e4c0"/>
</svg>

<svg class="abs" style="left:117px;top:392px" width="269" height="274" viewBox="117 392 269 274" font-family="Liberation Sans, Noto Sans CJK SC, sans-serif">
 <!-- item 3: 点这 -->
 <text x="141" y="423" font-size="16" font-weight="bold" fill="#f7cf1c" stroke="#8a5a0a" stroke-width="1.1" paint-order="stroke" transform="rotate(-8 156 416)">点这</text>
 <path d="M152 425 V431 M149.500 428.5 L152 431.5 L154.500 428.5 M160 424.500 V430.500 M157.500 428 L160 431 L162.500 428" fill="none" stroke="#8a5a0a" stroke-width="2.2"/>
 <path d="M152 425 V431 M149.500 428.5 L152 431.5 L154.500 428.5 M160 424.500 V430.500 M157.500 428 L160 431 L162.500 428" fill="none" stroke="#f7cf1c" stroke-width="1"/>
 <path d="M134.5 418 L135.7 420.8 L138.5 422 L135.7 423.2 L134.5 426 L133.3 423.2 L130.5 422 L133.3 420.8 Z" fill="#f7d21e" stroke="#b8860b" stroke-width="0.5"/><path d="M137.5 425.5 L138.1 426.9 L139.5 427.5 L138.1 428.1 L137.5 429.5 L136.9 428.1 L135.5 427.5 L136.9 426.9 Z" fill="#f7d21e" stroke="#b8860b" stroke-width="0.5"/><path d="M176.5 409.0 L177.8 412.1 L181.0 413.5 L177.8 414.9 L176.5 418.0 L175.2 414.9 L172.0 413.5 L175.2 412.1 Z" fill="#f7d21e" stroke="#b8860b" stroke-width="0.5"/><path d="M179.5 417.5 L180.1 418.9 L181.5 419.5 L180.1 420.1 L179.5 421.5 L178.9 420.1 L177.5 419.5 L178.9 418.9 Z" fill="#f7d21e" stroke="#b8860b" stroke-width="0.5"/><path d="M194.5 411.5 L196.2 415.4 L200.0 417 L196.2 418.6 L194.5 422.5 L192.8 418.6 L189.0 417 L192.8 415.4 Z" fill="#f7d21e" stroke="#b8860b" stroke-width="0.5"/><path d="M189 421 L189.9 423.1 L192 424 L189.9 424.9 L189 427 L188.1 424.9 L186 424 L188.1 423.1 Z" fill="#f7d21e" stroke="#b8860b" stroke-width="0.5"/>
 <!-- item 4: 戳这里 -->
 <text x="155" y="501" font-size="15" fill="#f2508e" transform="rotate(-6 176 494)" font-family="Noto Sans CJK SC, sans-serif" font-weight="400">戳这里</text>
 <path d="M184.500 502.500 Q180 512 171 519.500 M167.500 521.500 L173 514.500 M167.500 521.500 L176.500 522.500 M184.500 502.500 Q184 513 176.500 522.500 M182 506 Q180 515 173.500 520.500" fill="none" stroke="#f2508e" stroke-width="1.200"/>
 <!-- bubble -->
 <path d="M206 497 L213 494 Q216 486 222 480 Q222 487 227 490 L233 496 L233 524 L229 527 L212 527 Q207 520 210 510 Q209 502 206 497 Z" fill="#fff" stroke="#333" stroke-width="0.8"/>
 <text x="214.500" y="506" font-size="10" fill="#222" transform="rotate(-8 220 505)">约</text>
 <text x="213" y="520" font-size="10" fill="#222" transform="rotate(-8 220 518)">嘛!</text>
 <!-- person -->
 <path d="M229 527 Q231 516 240 513.500 H254 Q261 515 264 527 Z" fill="#4ab3e0"/>
 <path d="M231 520.500 H262 M230 524.300 H263.500" stroke="#fff" stroke-width="1.400"/>
 <path d="M228.500 492 Q226.500 474 238 468.500 Q247 464.500 256 468.500 Q266 474 263 493 Q262 500 259.500 503 L232.500 503 Q229.500 499 228.500 492 Z" fill="#4a2f1a"/>
 <path d="M231.500 473 L233.500 464.500 L241.500 468.500 Z M260.500 473 L257.500 465 L250 468.500 Z" fill="#fff" stroke="#3a3a3a" stroke-width="0.700"/>
 <path d="M233.500 492 Q233 482 238.500 478.500 Q246 476 254 478.500 Q259.500 482 259 493 Q258 505 250.500 511.500 Q246 514 242 511 Q234.500 504 233.500 492 Z" fill="#f6dcc4"/>
 <path d="M233 489 Q233.500 478 242 475.500 Q251 474 258.500 479.500 Q253 480 249 478.500 Q242 479 238 482 Q235 485 233 489 Z" fill="#4a2f1a"/>
 <ellipse cx="238.300" cy="498.500" rx="3.300" ry="2.700" fill="#f989b4"/><ellipse cx="256.300" cy="496.800" rx="3.300" ry="2.700" fill="#f989b4"/>
 <path d="M238.500 488.800 Q241 487.600 243.500 488.800 M250 488 Q252.500 486.800 255 488" stroke="#3a2414" stroke-width="1" fill="none"/>
 <ellipse cx="241.200" cy="491.600" rx="1.700" ry="1.100" fill="#2a1a10"/><ellipse cx="252.600" cy="490.800" rx="1.700" ry="1.100" fill="#2a1a10"/>
 <path d="M246.500 493 Q245.800 497 247.200 499" stroke="#c9a184" stroke-width="0.800" fill="none"/>
 <ellipse cx="247.600" cy="505" rx="2.700" ry="2.200" fill="#e8848c" stroke="#a8505a" stroke-width="0.500"/>
 <path d="M239.500 503 Q237 510 236 517 L232 527 H238.500 L243.500 513 Q242 507 239.500 503 Z M255.500 502 Q258.500 509 259.500 516 L263.500 527 H257 L252 512.500 Q253.500 506 255.500 502 Z" fill="#f6dcc4" stroke="#3a3a3a" stroke-width="0.700"/>
 <path d="M240 504 L238 509 M241.500 504.500 L240 510 M254.500 503 L256.500 508 M253 503.500 L254.800 509" stroke="#3a3a3a" stroke-width="0.600"/>
 <path d="M243.500 513 Q247.500 516 252 512.500" stroke="#222" stroke-width="1.100" fill="none"/>
 <!-- item 5 -->
 <rect x="128" y="568" width="248" height="42" fill="#fdfdfb"/>
 <path d="M145 578 Q137.500 579 138.500 590 Q139.500 600 145 600" fill="none" stroke="#5a3828" stroke-width="1.6"/>
 <rect x="144.500" y="570.500" width="31" height="39" rx="4" fill="#fff" stroke="#5a3828" stroke-width="1.5"/>
 <text x="149" y="583.500" font-size="10.500" fill="#4a2a20">不用</text>
 <text x="149" y="594.500" font-size="10.500" fill="#4a2a20">捧钱</text>
 <text x="149" y="605.500" font-size="10.500" fill="#4a2a20">场</text>
 <ellipse cx="135.500" cy="605" rx="7.500" ry="4.800" fill="#2e2418"/>
 <ellipse cx="132.500" cy="605.500" rx="2.200" ry="1.600" fill="#efe6d2"/><ellipse cx="138.500" cy="605.500" rx="2.200" ry="1.600" fill="#efe6d2"/>
 <text x="178" y="602" font-size="12" fill="#2f9b22" transform="rotate(-14 190 596)" font-family="Noto Sans CJK SC, sans-serif">点这!</text>
 <path d="M198 599 L190 609 M189.500 604.500 L190 609.500 L194.500 608" fill="none" stroke="#2f9b22" stroke-width="1.2"/>
 <path d="M198.500 603 Q204 600 211 601.500 L242 601 Q244.500 605 243 609.500 L236 609.500 Q233 606 236 603 L210 607 Q203 608.500 198.500 606.500 Z" fill="#7cc142" stroke="#4f9a2a" stroke-width="0.6"/>
 <path d="M210 579 L215 577.500 Q225 575.500 236 577.500 L242 579.500 Q240 583 241.500 588 L243.500 603 L240 604.500 L237 602.500 L233.500 604.500 L230 602.500 L226.500 604.500 L223 602.500 L219.500 604.500 L216 602.500 L212.500 604.500 L209 602.500 L207 603 Q210.500 592 210 579 Z" fill="#f7dc7a" stroke="#b79a3a" stroke-width="0.7"/>
 <path d="M236 577.500 L242 579.500 L240.500 584 Z" fill="#7cc142"/>
 <ellipse cx="218.500" cy="587.500" rx="4" ry="3" fill="#fff" stroke="#6a5a2a" stroke-width="0.6"/><ellipse cx="230.500" cy="587.500" rx="4" ry="3" fill="#fff" stroke="#6a5a2a" stroke-width="0.6"/>
 <circle cx="220" cy="588" r="1.200" fill="#333"/><circle cx="229" cy="588" r="1.200" fill="#333"/>
 <path d="M216 582 Q218.500 579.500 221 582 M228 581.500 Q230.500 579 233 581.500" fill="none" stroke="#6a5a2a" stroke-width="0.7"/>
 <path d="M222.500 593 H226.500 L224.500 597 Z" fill="#f0a020" stroke="#6a5a2a" stroke-width="0.5"/>
 <ellipse cx="213.500" cy="595" rx="2.600" ry="1.400" fill="#f9a0b8"/><ellipse cx="235.500" cy="595" rx="2.600" ry="1.400" fill="#f9a0b8"/>
 <text x="248.500" y="608" font-size="23" fill="#96c11f">点</text>
 <text x="273" y="608.500" font-size="12" fill="#f0517f" letter-spacing="0.85">底部捧个人场就行</text>
 <!-- item 6 -->
 <text x="133" y="653" font-size="8" fill="#6a5a50">hi ~</text>
 <text x="133" y="661" font-size="5" fill="#6a5a50">点这里</text>
 <path d="M157.500 666 Q158 658 163 657 H170 Q174 658 174.500 666 Z" fill="#8ecfd6"/>
 <ellipse cx="166.500" cy="651" rx="8.500" ry="8" fill="#fbe6d4" stroke="#d8b8a0" stroke-width="0.5"/>
 <path d="M160 646 Q163 641.500 168 643 Q171 641 172 645 Q168 645.500 166 648 Q163 646 160 646 Z" fill="#5a4a42"/>
 <circle cx="165" cy="641.800" r="1.500" fill="#5a4a42"/>
 <circle cx="167.500" cy="651" r="1.300" fill="#3a3a3a"/><circle cx="161" cy="652" r="1" fill="#3a3a3a"/>
 <ellipse cx="171" cy="655" rx="1.800" ry="1.200" fill="#f8a8b0"/>
 <path d="M159 660 Q161 655 164.500 657 L163 662 Z" fill="#fbe6d4" stroke="#d8b8a0" stroke-width="0.4"/>
</svg>

<div class="abs" style="left:402px;top:123px;width:641px;height:550px;box-shadow:inset 0 2px 6px rgba(0,0,0,.13)"></div>
<!-- RIGHT PANEL BG -->
<div id="right"></div>
<!-- FORM CARD -->
<div class="card" style="left:460px;top:134px;width:435px;height:188px"></div>
<div class="inp" style="left:475px;top:149px;width:405px;height:34px;line-height:34px;padding-left:13px">标题</div>
<div class="cnt" style="left:849px;top:161px;letter-spacing:.2px">0/64</div>
<div class="ph" style="left:475px;top:191px;width:116px;height:116px"><svg width="116" height="116" viewBox="0 0 116 116" style="display:block"><circle cx="87.2" cy="34.8" r="14" fill="#ececec"/><path d="M0 82 L34 46 L64.4 75 L75 63 L116 97 V116 H0 Z" fill="#ececec"/></svg></div>
<div class="inp" style="left:600px;top:191px;width:99px;height:34px;line-height:34px;padding-left:13px"><div style="width:71px;overflow:hidden">作者（选填）</div></div>
<div class="inp" style="left:705px;top:191px;width:175px;height:34px;line-height:34px;padding-left:13px">原文链接（选填）</div>
<div class="inp" style="left:600px;top:233px;width:280px;height:72px;line-height:20px;padding:3px 0 0 5px">摘要（选填）</div>
<div class="cnt" style="left:843px;top:291px">0/120</div>
<!-- EDITOR CARD -->
<div class="card" style="left:460px;top:329px;width:435px;height:330px"></div>

<svg class="abs" style="left:460px;top:335px" width="435" height="60" viewBox="460 335 435 60" font-family="Liberation Sans, Noto Sans CJK SC, sans-serif">
 <!-- undo/redo -->
 <path d="M475.5 343.2 L469.2 347.6 L475.5 352 V349.2 Q482 348.6 484.6 353.2 Q484 346.4 475.5 346 Z" fill="#dcdcdc"/>
 <path d="M506.5 343.2 L512.8 347.6 L506.5 352 V349.2 Q500 348.6 497.4 353.2 Q498 346.4 506.5 346 Z" fill="#dcdcdc"/>
 <text x="527.300" y="355" font-size="18" fill="#9c9c9c" stroke="#9c9c9c" stroke-width="0.500">B</text>
 <text x="557" y="355.400" font-size="20" font-style="italic" font-family="Liberation Serif, serif" fill="#a8a8a8">I</text>
 <text x="583" y="354" font-size="14" font-weight="bold" fill="#666">A</text>
 <path d="M601.9 347.0 H607.1 L604.5 350.2 Z" fill="#555"/>
 <rect x="621" y="342" width="14" height="12.8" fill="#777"/>
 <text x="622.6" y="352" font-size="10" fill="#fff">ab</text>
 <path d="M640.9 347.0 H646.1 L643.5 350.2 Z" fill="#555"/>
 <text x="661" y="353" font-size="12" fill="#333">段落格式</text>
 <path d="M713.9 347.0 H719.1 L716.5 350.2 Z" fill="#555"/>
 <text x="738" y="353" font-size="12" fill="#333">微软雅黑</text>
 <path d="M790.9 347.0 H796.1 L793.5 350.2 Z" fill="#555"/>
 <text x="815" y="354" font-size="13" fill="#111">16px</text>
 <path d="M867.6999999999999 347.0 H872.9 L870.3 350.2 Z" fill="#555"/>
 <!-- row 2 -->
 <!-- wand -->
 <path d="M470.2 382.6 L480.4 372.4 L482.8 374.8 L472.6 385 Z" fill="#666"/>
 <path d="M478.6 374.2 L481 376.6" stroke="#fff" stroke-width="0.8"/>
 <g fill="#999"><rect x="471" y="369" width="1.2" height="1.2"/><rect x="474.5" y="371" width="1.2" height="1.2"/><rect x="476.5" y="369" width="1.2" height="1.2"/><rect x="483" y="379" width="1.2" height="1.2"/></g>
 <path d="M489.9 375.5 H495.1 L492.5 378.7 Z" fill="#555"/>
 <!-- ordered list -->
 <g fill="#888"><rect x="512" y="371.2" width="12" height="1"/><rect x="512" y="376.5" width="12" height="1"/><rect x="512" y="381.8" width="12" height="1"/></g>
 <text x="507" y="373.6" font-size="4.5" fill="#777">1</text><text x="507" y="379" font-size="4.5" fill="#777">2</text><text x="507" y="384.4" font-size="4.5" fill="#777">3</text>
 <path d="M529.0 375.5 H534.2 L531.6 378.7 Z" fill="#555"/>
 <!-- line spacing -->
 <g fill="#888"><rect x="548" y="371" width="14" height="1"/><rect x="553.5" y="375" width="8.5" height="1"/><rect x="553.5" y="379" width="8.5" height="1"/><rect x="548" y="383" width="14" height="1"/>
 <path d="M548.2 376 H552.8 L550.5 373.6 Z"/><path d="M548.2 378.2 H552.8 L550.5 380.6 Z"/></g>
 <path d="M568.1 375.5 H573.3000000000001 L570.7 378.7 Z" fill="#555"/>
 <!-- table -->
 <rect x="588.5" y="372.5" width="12.5" height="11" fill="none" stroke="#aaa" stroke-width="1"/>
 <rect x="588" y="372" width="13.5" height="2.4" fill="#aaa"/>
 <path d="M588.5 377.6 H601 M588.5 380.6 H601 M592.7 374 V383.5 M596.9 374 V383.5" stroke="#aaa" stroke-width="0.9"/>
 <!-- eraser -->
 <path d="M615 372.6 L618.6 369 L629.4 380.6 L625.8 384.6 Z" fill="#a6a6a6"/>
 <path d="M616.4 372.6 L618.6 370.4 L623.6 375.8 L621.4 378.2 Z" fill="#f6f6f6"/>
 <!-- video -->
 <path d="M643 371 H654.6 V382.6 H643 Z M645 373 V380.6 H652.6 V373 Z" fill="#555" fill-rule="evenodd"/>
 <path d="M654.6 376 L659 372.2 V381.4 L654.6 377.6 Z" fill="#555"/>
 <!-- link -->
 <g fill="none" stroke="#8c8c8c" stroke-width="1">
  <rect x="-2.2" y="-5" width="4.4" height="10" rx="2.2" transform="translate(682 373.2) rotate(45)"/>
  <rect x="-2.2" y="-5" width="4.4" height="10" rx="2.2" transform="translate(675.200 380) rotate(45)"/>
 </g>
 <!-- image -->
 <path d="M699 370.8 H715 V384 H699 Z M700.6 372.4 V382.4 H713.4 V372.4 Z" fill="#666" fill-rule="evenodd"/>
 <path d="M701.4 381.8 V379.6 L704.6 376.4 L706.8 378.6 L709.6 375.4 L712.6 378.8 V381.8 Z" fill="#666"/>
 <circle cx="710.6" cy="374.6" r="1.2" fill="#666"/>
 <!-- align -->
 <rect x="724.5" y="365.5" width="21" height="23" rx="1.5" fill="#fff" stroke="#d2d2d2"/>
 <rect x="728" y="371" width="14" height="1" fill="#8e8e8e"/><rect x="728" y="375" width="9" height="1" fill="#8e8e8e"/><rect x="728" y="379" width="14" height="1" fill="#8e8e8e"/><rect x="728" y="383" width="9" height="1" fill="#8e8e8e"/><rect x="756" y="371" width="14" height="1" fill="#8e8e8e"/><rect x="758" y="375" width="10" height="1" fill="#8e8e8e"/><rect x="756" y="379" width="14" height="1" fill="#8e8e8e"/><rect x="758" y="383" width="10" height="1" fill="#8e8e8e"/><rect x="784" y="371" width="14" height="1" fill="#8e8e8e"/><rect x="789" y="375" width="9" height="1" fill="#8e8e8e"/><rect x="784" y="379" width="14" height="1" fill="#8e8e8e"/><rect x="789" y="383" width="9" height="1" fill="#8e8e8e"/><rect x="812" y="371" width="14" height="1" fill="#8e8e8e"/><rect x="812" y="375" width="14" height="1" fill="#8e8e8e"/><rect x="812" y="379" width="14" height="1" fill="#8e8e8e"/><rect x="812" y="383" width="14" height="1" fill="#8e8e8e"/>
 
 <g fill="#8c8c8c"><rect x="839.6" y="371.5" width="14.6" height="1"/><rect x="839.6" y="374.6" width="9" height="1.6"/><rect x="839.6" y="377.8" width="9" height="1.6"/><rect x="839.6" y="381" width="14.6" height="1"/><rect x="845" y="383.6" width="9.2" height="1"/>
 <path d="M850 376.4 H852 V374.8 L854.6 377 L852 379.2 V377.6 H850 Z"/></g>
 <text x="865" y="380.4" font-size="7.2" fill="#666">HTML</text>
</svg>

<!-- FLOAT TOOLS -->
<div class="abs" style="left:905px;top:410px;width:103px;height:28px;background:#484848"></div>
<div class="pill" style="top:452px;width:77px"><span>删除</span></div>
<div class="pill" style="top:494px;width:77px"><span>预览</span></div>
<div class="pill sf" style="top:536px;width:102px"><span>抓取图文</span></div>
<div class="pill sf" style="top:578px;width:102px"><span>存为模板</span></div>
<svg class="abs" style="left:900px;top:358px" width="40" height="250" viewBox="900 358 40 250">
 <path d="M905 377.5 L919 362 L933 377.5 L919 369.500 Z" fill="#f6f6f6" stroke="#efefef" stroke-width="0.6"/>
 <path d="M905 389.500 L919 374 L933 389.500 L919 381.500 Z" fill="#f6f6f6" stroke="#efefef" stroke-width="0.6"/>
 <g fill="none" stroke="#fff" stroke-width="1.1">
  <!-- trash -->
  <path d="M910 459.500 H928 M915 459.500 V455.500 H923 V459.500 M912.500 459.500 V475.500 H925.500 V459.500 M916.800 463 V472 M921.200 463 V472"/>
  <!-- eye -->
  <path d="M908.500 508 Q919 497.500 929.500 508 Q919 518.500 908.500 508 Z"/>
  <circle cx="919" cy="508" r="3.300"/><circle cx="919" cy="508" r="1" fill="#fff"/>
  <!-- cloud -->
  <path d="M916.500 556.500 H913.500 Q909.200 556 909.300 552 Q909.500 548.600 913 548 Q913.500 542 919 541.800 Q924 541.800 925.500 546.500 Q930 547 930 551.800 Q930 556 926 556.500 H922"/>
  <path d="M919.300 549.500 V560 M916 557 L919.300 560.300 L922.600 557"/>
  <!-- template -->
  <rect x="911.500" y="586" width="13.500" height="15.500" rx="1.500"/>
  <path d="M913.500 586 V584 H927.500 V599.500 H925"/>
 </g>
 <g fill="#fff"><rect x="913.600" y="588.500" width="4" height="6.500"/><rect x="919" y="588.500" width="4" height="3"/><rect x="919" y="593" width="4" height="6.500"/><rect x="913.600" y="596.500" width="4" height="3"/></g>
</svg>
<!-- RIGHT PANEL -->
<div class="abs" style="left:1063px;top:131px;width:280px;height:240px;background:#fff;border:1px solid #d6d6d6;box-shadow:inset 0 0 9px rgba(0,0,0,.2)"></div>
<div class="ph" style="left:1074px;top:142px;width:258px;height:160px"><svg width="258" height="160" viewBox="0 0 258 160" style="display:block"><circle cx="193.7" cy="78.6" r="31" fill="#ececec"/><path d="M20 160 L77 103 L135 160 Z M146 160 L167.3 139 L189 160 Z" fill="#ececec"/></svg></div>
<div class="abs" style="left:1074px;top:272px;width:258px;height:30px;background:rgba(0,0,0,.7)"></div>
<div class="abs" style="left:1084px;top:280px;color:#fff;font-size:14px;line-height:18px">标题</div>
<div class="abs" style="left:1064px;top:312px;width:278px;height:1px;background:#dcdcdc"></div>
<div class="abs" style="left:1075px;top:323px;width:259px;height:37px;background:#fff;border:2px dotted #d2d2d2"></div>
<div class="abs" style="left:1063px;top:386px;width:280px;height:40px;background:#fff;border:1px solid #ccc"></div>
<svg class="abs" style="left:1167px;top:401px" width="13" height="13" viewBox="0 0 12 12"><path d="M2.600 0.300 L6 3.700 L9.400 0.300 L11.700 2.600 L8.300 6 L11.700 9.400 L9.400 11.700 L6 8.300 L2.600 11.700 L0.300 9.400 L3.700 6 L0.300 2.600 Z" fill="#1a9be0"/></svg>
<div class="abs" style="left:1186px;top:399px;font-size:14px;line-height:18px;color:#1a9be0">全部删除</div>
<svg class="abs" style="left:1193px;top:331px" width="20" height="20" viewBox="0 0 20 20"><path d="M7 1 H13 V7 H19.500 V13 H13 V19 H7 V13 H0.800 V7 H7 Z" fill="#d6d9dc"/></svg>
<div class="btn" style="left:1063px;width:67px;background:#5bc0de;border-color:#46b8da">保存</div>
<div class="btn" style="left:1134px;width:66px;background:#428bca;border-color:#357ebd">同步</div>
<div class="btn" style="left:1204px;width:67px;background:#d9534f;border-color:#d43f3a">预览</div>
<div class="btn" style="left:1275px;width:67px;background:#f0ad4e;border-color:#eea236">群发</div>
<div id="bottom"></div>
</body>
</html>
